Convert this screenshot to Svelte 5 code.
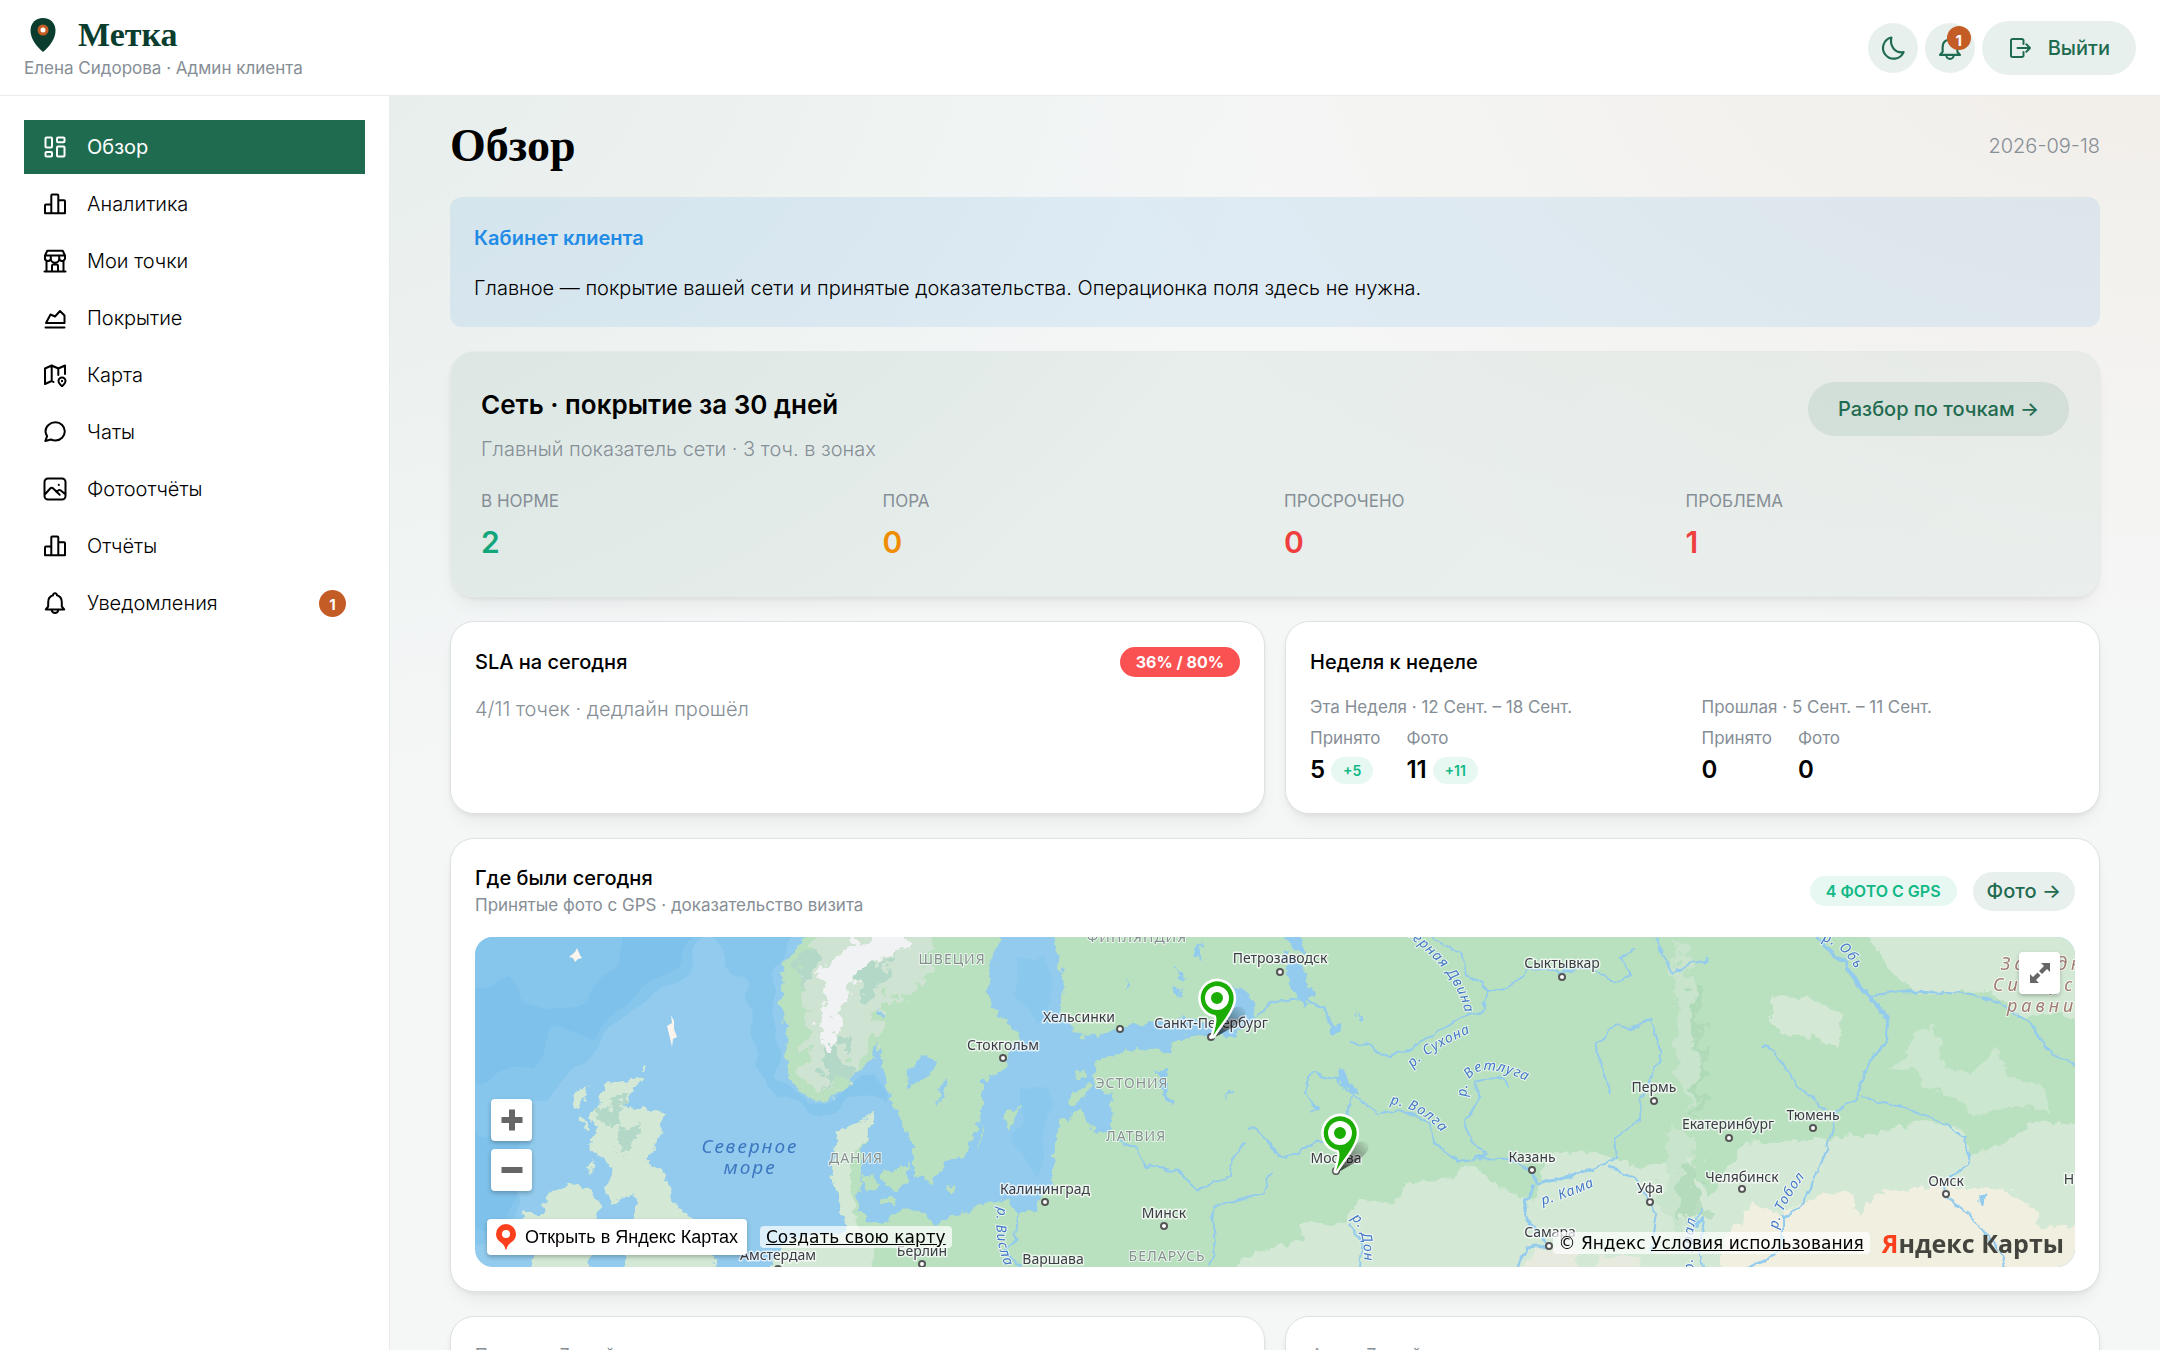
<script lang="ts">
  interface NavItem {
    id: string;
    label: string;
    icon: string;
    badge?: number;
  }

  const ICON_BARS =
    'M2 21.2h20M2 21V13.5a1 1 0 0 1 1-1h5.3V21M8.3 21V3.6a1 1 0 0 1 1-1h5a1 1 0 0 1 1 1V21M15.3 8.2H21a1 1 0 0 1 1 1V20.6';
  const ICON_BELL =
    'M12 2.2a2 2 0 0 1 2 2.1c3.1 1 4.8 3.6 4.8 6.9v4.3l2.4 2.9H2.8l2.4-2.9v-4.3c0-3.3 1.7-5.9 4.8-6.9a2 2 0 0 1 2-2.1M8.6 18.6a3.4 3.4 0 0 0 6.8 0';

  const NAV: NavItem[] = [
    {
      id: 'overview',
      label: 'Обзор',
      icon: 'M3.5 2.5H8a1 1 0 0 1 1 1v8a1 1 0 0 1-1 1H3.5a1 1 0 0 1-1-1v-8a1 1 0 0 1 1-1zM15 2.5h5.5a1 1 0 0 1 1 1v2.7a1 1 0 0 1-1 1H15a1 1 0 0 1-1-1V3.5a1 1 0 0 1 1-1zM15 11.5h5.5a1 1 0 0 1 1 1v8a1 1 0 0 1-1 1H15a1 1 0 0 1-1-1v-8a1 1 0 0 1 1-1zM3.5 17H8a1 1 0 0 1 1 1v2.5a1 1 0 0 1-1 1H3.5a1 1 0 0 1-1-1V18a1 1 0 0 1 1-1z',
    },
    { id: 'analytics', label: 'Аналитика', icon: ICON_BARS },
    {
      id: 'places',
      label: 'Мои точки',
      icon: 'M1.5 22.5h21M3.5 11.5v11M20.5 11.5v11M9 22.5v-5.5a1.5 1.5 0 0 1 1.5-1.5h3a1.5 1.5 0 0 1 1.5 1.5v5.5M4.3 1.8h15.4l2.3 4.7H2zM2 6.5v2a2.9 2.9 0 0 0 5.8 1a4.2 4.2 0 0 0 8.4 0a2.9 2.9 0 0 0 5.8-1v-2M7.8 6.5v3M16.2 6.5v3',
    },
    {
      id: 'coverage',
      label: 'Покрытие',
      icon: 'M2.5 21.5h19M3 17l4.5-8.5 4.5 2L17 5l4.5 4.5V17z',
    },
    {
      id: 'map',
      label: 'Карта',
      icon: 'M10.5 19l-1.8-1L2 21V5.5L8.7 2.5l6.6 3L22 2.5v8.5M8.7 2.5V18M15.3 5.5V12M19 23.3c-2.3-2.1-3.5-3.7-3.5-5.3a3.5 3.5 0 0 1 7 0c0 1.6-1.2 3.2-3.5 5.3zM19 17.7v.6',
    },
    {
      id: 'chats',
      label: 'Чаты',
      icon: 'M12.5 2.3c5.3 0 9.3 4.1 9.3 9s-4 9.2-9.3 9.2c-1.8 0-3.2-.3-4.6-1L2.3 21l1.8-4.9C3 14.6 2.5 13 2.5 11.3c0-5 4.5-9 10-9z',
    },
    {
      id: 'photos',
      label: 'Фотоотчёты',
      icon: 'M5 1.5h14a3.5 3.5 0 0 1 3.5 3.5v14a3.5 3.5 0 0 1-3.5 3.5H5A3.5 3.5 0 0 1 1.5 19V5A3.5 3.5 0 0 1 5 1.5zM1.8 17.5l5.4-6a2 2 0 0 1 3 0l6.5 6.3M13.5 15l1.7-1.5a2 2 0 0 1 2.6 0l4.5 3.8M15.8 7.8v.3',
    },
    { id: 'reports', label: 'Отчёты', icon: ICON_BARS },
    { id: 'notifications', label: 'Уведомления', icon: ICON_BELL, badge: 1 },
  ];

  const COVERAGE = [
    { label: 'В норме', value: 2, tone: 'ok' },
    { label: 'Пора', value: 0, tone: 'warn' },
    { label: 'Просрочено', value: 0, tone: 'bad' },
    { label: 'Проблема', value: 1, tone: 'bad' },
  ];

  const WEEKS = [
    {
      title: 'Эта Неделя · 12 Сент. – 18 Сент.',
      stats: [
        { label: 'Принято', value: 5, delta: '+5' },
        { label: 'Фото', value: 11, delta: '+11' },
      ],
    },
    {
      title: 'Прошлая · 5 Сент. – 11 Сент.',
      stats: [
        { label: 'Принято', value: 0, delta: '' },
        { label: 'Фото', value: 0, delta: '' },
      ],
    },
  ];

  // Map canvas is 1600x330 units, everything below is in those units.
  const CITIES = [
    { name: 'Петрозаводск', x: 805, y: 26, dx: 805, dy: 35 },
    { name: 'Хельсинки', x: 604, y: 85, dx: 645, dy: 92 },
    { name: 'Стокгольм', x: 528, y: 113, dx: 528, dy: 121 },
    { name: 'Санкт-Петербург', x: 736, y: 91, dx: 736, dy: 100 },
    { name: 'Москва', x: 861, y: 226, dx: 861, dy: 234 },
    { name: 'Казань', x: 1057, y: 225, dx: 1057, dy: 233 },
    { name: 'Самара', x: 1075, y: 300, dx: 1074, dy: 309 },
    { name: 'Калининград', x: 570, y: 257, dx: 570, dy: 265 },
    { name: 'Минск', x: 689, y: 281, dx: 689, dy: 289 },
    { name: 'Варшава', x: 578, y: 327, dx: 578, dy: 338 },
    { name: 'Сыктывкар', x: 1087, y: 31, dx: 1087, dy: 40 },
    { name: 'Пермь', x: 1179, y: 155, dx: 1179, dy: 164 },
    { name: 'Екатеринбург', x: 1253, y: 192, dx: 1254, dy: 201 },
    { name: 'Тюмень', x: 1338, y: 183, dx: 1338, dy: 191 },
    { name: 'Челябинск', x: 1267, y: 245, dx: 1267, dy: 252 },
    { name: 'Уфа', x: 1175, y: 256, dx: 1175, dy: 265 },
    { name: 'Омск', x: 1471, y: 249, dx: 1471, dy: 257 },
    { name: 'Новосибирск', x: 1634, y: 247, dx: 1634, dy: 257 },
    { name: 'Амстердам', x: 303, y: 323, dx: 303, dy: 332 },
    { name: 'Берлин', x: 447, y: 319, dx: 447, dy: 327 },
  ];

  const COUNTRIES = [
    { name: 'ШВЕЦИЯ', x: 477, y: 27 },
    { name: 'ДАНИЯ', x: 381, y: 226 },
    { name: 'ФИНЛЯНДИЯ', x: 662, y: 5 },
    { name: 'ЭСТОНИЯ', x: 657, y: 151 },
    { name: 'ЛАТВИЯ', x: 661, y: 204 },
    { name: 'БЕЛАРУСЬ', x: 692, y: 324 },
  ];

  const RIVER_NAMES = [
    { id: 'dvina', name: 'Северная Двина', d: 'M918-14C950 14 985 36 992 86' },
    { id: 'suhona', name: 'р. Сухона', d: 'M938 131Q952 114 1000 94' },
    { id: 'vetluga', name: 'р. Ветлуга', d: 'M992 160Q990 138 1006 134T1056 146' },
    { id: 'volga', name: 'р. Волга', d: 'M915 167Q950 172 972 202' },
    { id: 'don', name: 'р. Дон', d: 'M876 282Q890 292 889 328' },
    { id: 'kama', name: 'р. Кама', d: 'M1068 268Q1090 262 1124 247' },
    { id: 'tobol', name: 'р. Тобол', d: 'M1303 292Q1306 268 1336 232' },
    { id: 'ob', name: 'р. Обь', d: 'M1347 4Q1372 10 1384 40' },
    { id: 'ural', name: 'р. Урал', d: 'M1219 334Q1214 300 1224 272' },
    { id: 'visla', name: 'р. Висла', d: 'M523 270Q516 306 538 346' },
  ];

  const RIVERS = [
    '782,81 796,66 825,61 850,71 855,87',
    '957,0 986,17 993,37 1014,54 1007,74 986,81 954,101 929,116 907,119 893,107 875,104',
    '1014,54 1036,49 1054,31 1083,34 1114,31 1141,46 1157,39 1145,21 1161,11',
    '836,174 845,172 829,157 832,145 839,136 857,141 882,161 904,177 921,172 954,184 961,207 982,224 1007,221 1032,222 1054,232',
    '1032,151 1030,143 1018,139 1000,144 1004,164 989,184 996,204 1011,217 1004,223',
    '875,161 873,187 864,204 843,204 811,221 800,214 796,207 775,189',
    '643,204 661,211 671,229 704,234 723,254 754,239 758,222 770,204',
    '796,236 789,257 739,269 737,285 741,304 734,330',
    '873,286 887,304 884,330',
    '543,274 541,301 529,314 546,330',
    '1164,167 1178,137 1186,117 1176,82 1157,91 1143,87 1120,107 1135,157',
    '1118,231 1141,221 1139,201 1166,184 1164,167',
    '1133,229 1159,241 1176,267 1182,277 1176,317',
    '1180,0 1190,20 1196,37 1215,26 1231,24 1233,20',
    '1394,59 1425,54 1495,57 1526,67 1557,87 1573,114 1600,129',
    '1386,161 1413,166 1464,184 1491,201 1495,224 1470,247 1471,260 1495,277 1526,317 1530,330',
    '1285,112 1293,107 1324,151 1351,174',
    '1382,161 1363,174 1351,214 1328,267 1308,281 1308,307 1293,322 1273,330',
    '1227,271 1220,290 1229,281 1225,317 1229,330',
  ];

  const WIDE_RIVERS = [
    '1340,0 1371,27 1383,50 1394,59 1413,81 1411,105 1394,124 1382,161',
    '1054,232 1064,247 1075,244 1098,239 1118,231',
    '1061,248 1052,262 1050,275 1057,291 1075,309 1050,311 1043,330',
  ];

  const PINS = [
    { id: 'spb', x: 738, y: 100 },
    { id: 'msk', x: 861, y: 235 },
  ];

  let active = $state('overview');
</script>

{#snippet icon(d: string)}
  <svg class="icon" viewBox="0 0 24 24" aria-hidden="true"><path {d} /></svg>
{/snippet}

<div class="shell">
  <header class="topbar">
    <div class="brand">
      <div class="brand-row">
        <svg class="brand-mark" viewBox="0 0 38 38" aria-hidden="true">
          <path d="M19 2C11.5 2 6.5 7.3 6.5 14.5c0 8 5.5 15.5 12.5 21.5 7-6 12.5-13.5 12.5-21.5C31.5 7.3 26.5 2 19 2z" fill="#0b3d2e" />
          <circle cx="19" cy="14" r="4" fill="#fff" stroke="#c45c26" stroke-width="3" />
        </svg>
        <span class="brand-name">Метка</span>
      </div>
      <div class="brand-user">Елена Сидорова · Админ клиента</div>
    </div>
    <div class="top-actions">
      <button type="button" class="round" aria-label="Тёмная тема">
        {@render icon('M10.5 2.3C8.7 9.5 13.5 17.2 21.8 15.8A9.9 9.9 0 1 1 10.5 2.3z')}
      </button>
      <button type="button" class="round" aria-label="Уведомления">
        {@render icon(ICON_BELL)}
        <span class="count count-over">1</span>
      </button>
      <button type="button" class="pill exit">
        {@render icon('M15.5 8V4.5a1.5 1.5 0 0 0-1.5-1.5H4.5A1.5 1.5 0 0 0 3 4.5v15A1.5 1.5 0 0 0 4.5 21H14a1.5 1.5 0 0 0 1.5-1.5V16M9.5 12H22M18.3 8.3L22 12l-3.7 3.7')}
        Выйти
      </button>
    </div>
  </header>

  <div class="body">
    <nav class="side" aria-label="Разделы">
      {#each NAV as item (item.id)}
        <a
          href="#{item.id}"
          class="nav-item"
          class:active={active === item.id}
          onclick={() => (active = item.id)}
        >
          {@render icon(item.icon)}
          <span class="nav-label">{item.label}</span>
          {#if item.badge}<span class="count count-side">{item.badge}</span>{/if}
        </a>
      {/each}
    </nav>

    <main class="main">
      <div class="page-head">
        <h1>Обзор</h1>
        <span class="date">2026-09-18</span>
      </div>

      <section class="alert">
        <h2>Кабинет клиента</h2>
        <p>Главное — покрытие вашей сети и принятые доказательства. Операционка поля здесь не нужна.</p>
      </section>

      <section class="card hero">
        <div class="hero-head">
          <div>
            <h2>Сеть · покрытие за 30 дней</h2>
            <p class="muted">Главный показатель сети · 3 точ. в зонах</p>
          </div>
          <button type="button" class="pill">Разбор по точкам →</button>
        </div>
        <div class="hero-stats">
          {#each COVERAGE as stat (stat.label)}
            <div>
              <div class="stat-label">{stat.label}</div>
              <div class="stat-value {stat.tone}">{stat.value}</div>
            </div>
          {/each}
        </div>
      </section>

      <div class="pair">
        <section class="card">
          <div class="card-head">
            <h3>SLA на сегодня</h3>
            <span class="badge badge-red">36% / 80%</span>
          </div>
          <p class="muted">4/11 точек · дедлайн прошёл</p>
        </section>
        <section class="card">
          <div class="card-head"><h3>Неделя к неделе</h3></div>
          <div class="weeks">
            {#each WEEKS as week (week.title)}
              <div>
                <div class="small">{week.title}</div>
                <div class="week-stats">
                  {#each week.stats as s (s.label)}
                    <div>
                      <div class="small">{s.label}</div>
                      <div class="week-value">
                        <b>{s.value}</b>
                        {#if s.delta}<span class="delta">{s.delta}</span>{/if}
                      </div>
                    </div>
                  {/each}
                </div>
              </div>
            {/each}
          </div>
        </section>
      </div>

      <section class="card">
        <div class="map-head">
          <div>
            <h3>Где были сегодня</h3>
            <p class="small">Принятые фото с GPS · доказательство визита</p>
          </div>
          <div class="map-actions">
            <span class="badge badge-green">4 ФОТО С GPS</span>
            <button type="button" class="pill pill-small">Фото →</button>
          </div>
        </div>

        <div class="map">
          <svg class="map-canvas" viewBox="0 0 1600 330" preserveAspectRatio="xMidYMid slice" role="img" aria-label="Карта визитов">
            <defs>
              <!-- breaks straight polygon edges up into a coastline -->
              <filter id="coast" x="0" y="0" width="1600" height="330" filterUnits="userSpaceOnUse">
                <feTurbulence type="fractalNoise" baseFrequency="0.11" numOctaves="3" seed="4" result="n" />
                <feDisplacementMap in="SourceGraphic" in2="n" scale="12" xChannelSelector="R" yChannelSelector="G" />
              </filter>
              <filter id="stream" x="0" y="0" width="1600" height="330" filterUnits="userSpaceOnUse">
                <feTurbulence type="fractalNoise" baseFrequency="0.09" numOctaves="2" seed="9" result="n" />
                <feDisplacementMap in="SourceGraphic" in2="n" scale="8" xChannelSelector="R" yChannelSelector="G" />
              </filter>
              <filter id="ridge" x="0" y="0" width="1600" height="330" filterUnits="userSpaceOnUse">
                <feTurbulence type="fractalNoise" baseFrequency="0.07" numOctaves="4" seed="2" result="n" />
                <feDisplacementMap in="SourceGraphic" in2="n" scale="36" xChannelSelector="R" yChannelSelector="G" />
              </filter>
              <filter id="seabed" x="0" y="0" width="1600" height="330" filterUnits="userSpaceOnUse">
                <feTurbulence type="fractalNoise" baseFrequency="0.02" numOctaves="2" seed="7" result="n" />
                <feDisplacementMap in="SourceGraphic" in2="n" scale="40" xChannelSelector="R" yChannelSelector="G" />
              </filter>
              <linearGradient id="pin-shade" x1="0" y1="1" x2="1" y2="0">
                <stop offset="0" stop-color="#000" stop-opacity="0.75" />
                <stop offset="1" stop-color="#000" stop-opacity="0" />
              </linearGradient>
            </defs>

            <rect width="1600" height="330" fill="#92cbed" />
            <g filter="url(#seabed)">
              <path fill="#86c6ed" d="M-20-20H245L200 45 150 85 95 130 60 165 45 230 30 290-20 320z" />
              <path fill="#7ec1ea" d="M150-20H240L195 30 160 60 120 100 80 90 50 130-20 150V60L30 40 60 70 110 70 140 30z" />
              <path fill="#7ec1ea" d="M-20 200L45 190 50 240 20 285-20 290z" />
              <path fill="#86c6ed" d="M235-20H325L300 30 300 90 300 140 330 170 375 155 400 130 410 170 385 165 350 180 300 165 280 120 275 70 250 35z" />
              <path fill="#86c6ed" d="M540 20L575 20 580 70 560 90 545 60zM545 150L570 160 560 240 545 220z" opacity="0.6" />
            </g>

            <g filter="url(#coast)">
              <path
                fill="#b9e0bf"
                d="M339-10L318 16 305 27 309 47 305 62 309 84 312 101 309 117 314 141 323 154 348 165 368 154 382 134 398 124 402 102 404 117 411 141 416 164 425 184 439 207 439 241 457 246 464 237 470 222 489 221 502 191 507 164 507 144 529 131 532 121 536 111 546 97 532 87 518 71 512 51 518 17 529-10z"
              />
              <path
                fill="#b9e0bf"
                d="M577-10L584 24 589 51 584 74 593 84 605 101 632 97 657 87 696 84 711 79 739 90 739 99 718 98 698 107 698 116 661 111 632 121 620 127 621 151 637 156 636 191 623 196 605 174 587 184 579 204 579 247 564 261 561 274 539 274 534 262 507 267 461 287 443 274 429 271 407 287 393 284 382 267 386 237 386 215 393 201 400 174 386 184 361 197 357 237 366 267 371 294 332 299 307 306 290 345H1620V-10z"
              />
              <path fill="#b9e0bf" d="M386 240L400 238 404 252 392 256zM407 232L420 236 434 226 433 248 418 254 408 244zM404 262L420 260 418 268 406 268zM511 184L500 218 504 200zM546 166L540 180 530 197 529 177zM593 164L605 150 618 147 612 160 597 168zM600 134L612 132 610 142 602 142zM470 251L478 248 476 256z" />
              <path
                fill="#d3e9d5"
                d="M132 146L166 142 150 171 188 174 186 197 171 224 189 237 198 267 218 282 230 300 248 345H150L150 317 161 281 161 257 136 266 132 251 139 231 121 217 114 211 121 191 114 181 125 164zM77 254L96 247 116 252 125 271 118 304 111 345H52L61 317 48 277 71 277 70 267zM113 149L111 161 100 171 98 157zM104 175L114 190 112 194 104 180zM168 129L173 132 166 132zM112 230L120 222 117 238z"
              />
              <path fill="#d3e9d5" d="M361 197L386 184 400 174 393 201 382 215 374 225 378 270 384 290 400 302 395 345H290L307 306 332 299 371 294 366 267 357 237z" />
              <path
                fill="#d3e9d5"
                d="M993 226L979 241 934 246 918 267 886 262 868 286 825 287 829 304 782 314 740 345H1620V190L1560 184 1530 205 1499 217 1484 191 1449 184 1398 197 1324 204 1270 207 1262 217 1235 260 1220 240 1210 210 1190 225 1164 231 1140 222 1114 214 1075 217 1060 262 1030 255z"
              />
              <path fill="#d3e9d5" d="M1386-10L1421 41 1445 57 1515 54 1545 80 1580 75 1620 90V-10zM1297 57L1340 62 1367 80 1364 112 1340 100 1310 98 1297 85z" />
              <path fill="#d3e9d5" opacity="0.75" d="M1440 95L1460 90 1470 130 1500 135 1520 110 1535 140 1570 150 1575 175 1540 168 1500 180 1480 160 1450 150 1440 130 1415 135 1430 118z" />
              <path fill="#e7eadf" d="M1040 345L1060 312 1100 310 1105 345zM1115 345L1125 318 1165 322 1160 345z" />
              <path
                fill="#f1efe0"
                d="M1242 345L1250 300 1266 284 1277 267 1308 277 1347 257 1379 254 1382 277 1406 254 1464 251 1530 251 1561 274 1565 291 1620 287V345z"
              />
            </g>

            <g filter="url(#ridge)">
              <path fill="#cfe3d2" d="M345-10H455L455 30 435 55 410 62 395 110 370 140 345 155 328 140 333 90 325 60 332 30z" />
              <path fill="#b4d8c8" d="M345 110L370 100 372 140 350 150zM385 30L415 20 410 55 385 60zM322 20L340 8 342 30 325 50zM130 165L150 160 145 190 128 190zM145 195L165 190 160 210 142 215z" />
              <path fill="#f1f2f3" d="M405-20H435L425 15 400 20 385 35 375 55 366 75 360 100 354 118 348 110 345 80 352 60 345 45 350 25 370 12 390 5z" />
              <path fill="#c9e4cc" d="M1200 0L1215 10 1218 70 1224 130 1212 180 1202 120zM1195 190L1215 200 1225 260 1205 300 1185 270z" />
              <path fill="#a9d6b3" d="M1218 40L1226 60 1228 180 1220 170zM1205 215L1222 235 1228 270 1205 290z" opacity="0.6" />
            </g>

            <g filter="url(#coast)" fill="#92cbed">
              <path d="M436 128L446 118 460 124 455 140 440 145 432 150zM473 141L470 156 462 169 464 154z" />
              <path d="M754 48L770 54 779 66 780 84 768 90 760 101 736 96 745 80z" />
              <path d="M808 14L822 22 830 36 839 57 829 68 818 54 811 36z" />
              <path d="M803-10H822L830 16 820 14z" />
              <path d="M680 134L692 134 692 150 700 167 692 165 686 150z" />
              <path d="M862 129L873 141 886 157 876 159 866 146zM855 87L868 90 866 96 856 96zM881 72L889 85 885 87zM752 150L760 156 752 161zM698 30L712 40 710 44zM694 48L708 54 702 60zM722 10L728 6 724 24 718 20zM652 40L655 50 652 54z" />
              <path d="M412 205L418 206 416 212zM402 70L412 78 408 80zM1500 258L1512 256 1508 268 1502 264z" />
            </g>
            <path fill="#fbf4ec" d="M94 20l6-5 2-4 3 7 2 3-4 1-3 3-2-4zM192 89l5-3-1-8 3 6v8l3 8-4 2-1 8-2-9z" />

            <g class="rivers" filter="url(#stream)">
              {#each RIVERS as points}<polyline {points} />{/each}
              {#each WIDE_RIVERS as points}<polyline class="wide" {points} />{/each}
            </g>

            {#each RIVER_NAMES as river (river.id)}
              <path id="path-{river.id}" d={river.d} fill="none" />
              <text class="lbl river"><textPath href="#path-{river.id}">{river.name}</textPath></text>
            {/each}
            {#each COUNTRIES as c (c.name)}
              <text class="lbl country" x={c.x} y={c.y}>{c.name}</text>
            {/each}
            <text class="sea" x="275" y="216">Северное</text>
            <text class="sea" x="275" y="237">море</text>
            <text class="lbl plain" x="1526" y="33">Западно-</text>
            <text class="lbl plain" x="1518" y="54">Сибирская</text>
            <text class="lbl plain" x="1532" y="75">равнина</text>
            {#each CITIES as c (c.name)}
              <circle class="dot" cx={c.dx} cy={c.dy} r="3" />
              <text class="lbl city" x={c.x} y={c.y}>{c.name}</text>
            {/each}

            {#each PINS as pin (pin.id)}
              <g transform="translate({pin.x} {pin.y})">
                <path d="M2 0L16-24C22-34 35-32 32-22 28-14 12-5 2 0z" fill="url(#pin-shade)" />
                <path d="M0-1C6-11 17-23 20-34A16.5 17 0 1 0 2-22C5-20 3-10 0-1z" fill="#1bad03" stroke="#fff" stroke-width="5" stroke-linejoin="round" paint-order="stroke" />
                <circle cx="4" cy="-39" r="9" fill="#1bad03" stroke="#fff" stroke-width="6" />
              </g>
            {/each}
          </svg>

          <button type="button" class="map-btn fullscreen" aria-label="На весь экран">
            <svg viewBox="0 0 24 24" aria-hidden="true">
              <path d="M13 2h9v9l-3-3-5 5-3-3 5-5zM11 22H2v-9l3 3 4.5-4.5 3 3L8 19z" />
            </svg>
          </button>
          <div class="zoom">
            <button type="button" class="map-btn" aria-label="Приблизить">
              <svg viewBox="0 0 24 24" aria-hidden="true"><path d="M9 1.5h6V9h7.5v6H15v7.5H9V15H1.5V9H9z" /></svg>
            </button>
            <button type="button" class="map-btn" aria-label="Отдалить">
              <svg viewBox="0 0 24 24" aria-hidden="true"><path d="M1.5 9h21v6h-21z" /></svg>
            </button>
          </div>
          <div class="map-links">
            <a class="open-maps" href="#open-maps">
              <svg viewBox="0 0 20 26" aria-hidden="true">
                <path d="M10 0A10 10 0 0 0 0 10c0 4 2 6.5 5 8.5 2.5 1.8 4 4 4.3 6.5.1.8 1.3.8 1.4 0 .3-2.5 1.8-4.7 4.3-6.5 3-2 5-4.5 5-8.5A10 10 0 0 0 10 0z" fill="#fc3f1d" />
                <circle cx="10" cy="10" r="4" fill="#fff" />
              </svg>
              Открыть в Яндекс Картах
            </a>
            <a class="make-map" href="#make-map">Создать свою карту</a>
          </div>
          <div class="copyright">
            <span class="terms">© Яндекс <a href="#terms">Условия использования</a></span>
            <span class="logo"><i>Я</i>ндекс Карты</span>
          </div>
        </div>
      </section>

      <div class="pair">
        <section class="card chart"><h3 class="small">Принято · 7 дней</h3></section>
        <section class="card chart"><h3 class="small">Фото · 7 дней</h3></section>
      </div>
    </main>
  </div>
</div>

<style>
  :global(body) {
    overflow: hidden;
    background: #f5f7f6;
  }
  .shell {
    --green: #1f6b4f;
    --muted: #868e96;
    --line: #dee2e6;
    height: 100vh;
    display: flex;
    flex-direction: column;
    overflow: hidden;
    font: 300 20px/30px Inter, sans-serif;
    color: #000;
    background:
      radial-gradient(1100px 800px at 10% 0%, rgba(31, 107, 79, 0.08), transparent 100%),
      radial-gradient(1100px 700px at 100% 0%, rgba(196, 112, 38, 0.07), transparent 100%),
      #f5f7f7;
  }
  h1,
  h2,
  h3,
  p {
    margin: 0;
  }
  button {
    font: inherit;
    border: 0;
    padding: 0;
    cursor: pointer;
  }
  .icon {
    width: 24px;
    height: 24px;
    flex: none;
    fill: none;
    stroke: currentColor;
    stroke-width: 2;
    stroke-linecap: round;
    stroke-linejoin: round;
  }

  .topbar {
    flex: none;
    display: flex;
    align-items: center;
    justify-content: space-between;
    height: 96px;
    box-sizing: border-box;
    padding: 0 24px;
    background: #fff;
    border-bottom: 1px solid #e9ecef;
  }
  .brand-row {
    display: flex;
    align-items: center;
    gap: 16px;
    height: 40px;
  }
  .brand-mark {
    width: 38px;
    height: 38px;
  }
  .brand-name {
    font: 700 34px/40px 'Liberation Serif', serif;
    color: #0b3d2e;
  }
  .brand-user {
    font-size: 17px;
    line-height: 26px;
    font-weight: 400;
    color: var(--muted);
  }
  .top-actions {
    display: flex;
    align-items: center;
    gap: 7px;
  }
  .round {
    position: relative;
    display: grid;
    place-items: center;
    width: 50px;
    height: 50px;
    border-radius: 50%;
    background: #e8f0ed;
    color: var(--green);
  }
  .round .icon {
    width: 26px;
    height: 26px;
  }
  .pill {
    display: flex;
    align-items: center;
    gap: 16px;
    height: 54px;
    padding: 0 30px;
    border-radius: 27px;
    background: rgba(31, 107, 79, 0.1);
    color: var(--green);
    font-weight: 500;
  }
  .exit {
    padding: 0 26px;
  }
  .pill-small {
    height: 39px;
    padding: 0 14px;
  }
  .count {
    display: grid;
    place-items: center;
    border-radius: 50%;
    background: #c45c26;
    color: #fff;
    font-weight: 700;
    font-size: 15px;
  }
  .count-over {
    position: absolute;
    top: 3px;
    right: 4px;
    width: 24px;
    height: 24px;
  }
  .count-side {
    width: 27px;
    height: 27px;
    margin-left: auto;
  }

  .body {
    flex: 1;
    min-height: 0;
    display: flex;
  }
  .side {
    flex: none;
    width: 390px;
    box-sizing: border-box;
    padding: 24px;
    display: flex;
    flex-direction: column;
    gap: 3px;
    background: #fff;
    border-right: 1px solid #e9ecef;
  }
  .nav-item {
    display: flex;
    align-items: center;
    height: 54px;
    padding: 0 19px;
    gap: 20px;
    color: #000;
    text-decoration: none;
  }
  .nav-item.active {
    background: var(--green);
    color: #fff;
    font-weight: 400;
  }

  .main {
    flex: 1;
    min-width: 0;
    padding: 22px 60px;
    display: flex;
    flex-direction: column;
    gap: 24px;
  }
  .main > * {
    flex-shrink: 0;
  }
  .page-head {
    display: flex;
    align-items: center;
    justify-content: space-between;
    height: 55px;
  }
  h1 {
    font: 700 46px/48px 'Liberation Serif', serif;
  }
  .date {
    color: var(--muted);
  }
  .alert {
    padding: 24px;
    border-radius: 12px;
    background: rgba(34, 139, 230, 0.1);
    display: flex;
    flex-direction: column;
    gap: 18px;
  }
  .alert h2 {
    font-size: 20px;
    line-height: 34px;
    font-weight: 600;
    color: #228be6;
  }
  .card {
    box-sizing: border-box;
    padding: 24px;
    border: 1px solid var(--line);
    border-radius: 24px;
    background: #fff;
    box-shadow:
      0 2px 4px rgba(0, 0, 0, 0.05),
      0 12px 20px -8px rgba(0, 0, 0, 0.08);
  }
  .hero {
    padding: 30px;
    border-color: #e6eaea;
    background: linear-gradient(135deg, rgba(31, 107, 79, 0.08), rgba(31, 107, 79, 0.05));
  }
  .hero-head {
    display: flex;
    justify-content: space-between;
    align-items: flex-start;
  }
  .hero h2 {
    font-size: 26px;
    line-height: 46px;
    font-weight: 600;
  }
  .hero p {
    margin-top: 6px;
  }
  .muted {
    color: var(--muted);
  }
  .hero-stats {
    display: grid;
    grid-template-columns: repeat(4, 1fr);
    gap: 18px;
    margin-top: 24px;
  }
  .stat-label {
    font-size: 17px;
    line-height: 27px;
    font-weight: 400;
    color: var(--muted);
    text-transform: uppercase;
  }
  .stat-value {
    margin-top: 3px;
    font-size: 30px;
    line-height: 48px;
    font-weight: 600;
  }
  .ok {
    color: #12a67a;
  }
  .warn {
    color: #f08c00;
  }
  .bad {
    color: #f03e3e;
  }

  .pair {
    display: grid;
    grid-template-columns: 1fr 1fr;
    gap: 20px;
  }
  .pair .card {
    min-height: 193px;
  }
  .card-head {
    display: flex;
    justify-content: space-between;
    align-items: center;
    height: 32px;
    margin-bottom: 16px;
  }
  h3 {
    font-size: 20px;
    line-height: 32px;
    font-weight: 500;
  }
  .badge {
    height: 30px;
    padding: 0 16px;
    border-radius: 15px;
    font-size: 16px;
    line-height: 30px;
    font-weight: 700;
  }
  .badge-red {
    background: #fa5252;
    color: #fff;
  }
  .badge-green {
    background: #e7f8f2;
    color: #12b886;
    font-weight: 600;
  }
  .small {
    font-size: 17px;
    line-height: 27px;
    font-weight: 400;
    color: var(--muted);
  }
  .weeks {
    display: grid;
    grid-template-columns: 1fr 1fr;
    gap: 18px;
  }
  .week-stats {
    display: flex;
    gap: 26px;
    margin-top: 4px;
  }
  .week-value {
    display: flex;
    align-items: center;
    gap: 6px;
    height: 36px;
    font-size: 24px;
  }
  .week-value b {
    font-weight: 600;
  }
  .delta {
    height: 27px;
    padding: 0 12px;
    border-radius: 14px;
    background: #e7f8f2;
    color: #12b886;
    font-size: 14px;
    line-height: 27px;
    font-weight: 600;
  }
  .chart {
    padding-top: 25px;
  }

  .map-head {
    display: flex;
    justify-content: space-between;
    align-items: center;
    height: 56px;
    margin-bottom: 18px;
  }
  .map-head h3 {
    line-height: 28px;
  }
  .map-actions {
    display: flex;
    align-items: center;
    gap: 16px;
  }
  .map {
    position: relative;
    height: 330px;
    border-radius: 18px;
    overflow: hidden;
  }
  .map-canvas {
    display: block;
    width: 100%;
    height: 100%;
    font-family: 'Noto Sans', sans-serif;
    font-weight: 400;
  }
  .rivers polyline {
    fill: none;
    stroke: #92cbed;
    stroke-width: 2;
    stroke-linejoin: round;
  }
  .rivers .wide {
    stroke-width: 3;
  }
  .lbl {
    stroke: rgba(255, 255, 255, 0.7);
    stroke-width: 3px;
    stroke-linejoin: round;
    paint-order: stroke;
  }
  .city {
    font-size: 14px;
    fill: #3c3c44;
    text-anchor: middle;
  }
  .dot {
    fill: #fff;
    stroke: #555;
    stroke-width: 2;
  }
  .country {
    font-size: 14px;
    letter-spacing: 1px;
    fill: #84908d;
    stroke-width: 2px;
    text-anchor: middle;
  }
  .river {
    font-size: 14px;
    font-style: italic;
    letter-spacing: 1px;
    fill: #4177c6;
    stroke-width: 2px;
  }
  .sea {
    font-size: 19px;
    font-style: italic;
    letter-spacing: 2px;
    fill: #3d77c2;
    text-anchor: middle;
  }
  .plain {
    font-size: 18px;
    font-style: italic;
    letter-spacing: 4px;
    fill: #a07c72;
    stroke-width: 2px;
  }
  .map-btn {
    display: grid;
    place-items: center;
    width: 41px;
    height: 42px;
    border-radius: 4px;
    background: #fff;
    box-shadow: 0 2px 4px rgba(0, 0, 0, 0.25);
  }
  .map-btn svg {
    width: 24px;
    height: 24px;
    fill: #666;
  }
  .fullscreen {
    position: absolute;
    top: 15px;
    right: 15px;
  }
  .zoom {
    position: absolute;
    left: 16px;
    top: 162px;
    display: grid;
    gap: 8px;
  }
  .map-links {
    position: absolute;
    left: 12px;
    bottom: 12px;
    display: flex;
    align-items: center;
    gap: 13px;
    color: #000;
  }
  .map-links a {
    color: inherit;
  }
  .open-maps {
    display: flex;
    align-items: center;
    gap: 9px;
    height: 36px;
    padding: 0 9px;
    border-radius: 4px;
    background: #fff;
    box-shadow: 0 2px 4px rgba(0, 0, 0, 0.25);
    font: 18px/36px 'Liberation Sans', sans-serif;
    text-decoration: none;
  }
  .open-maps svg {
    width: 20px;
    height: 26px;
  }
  .make-map,
  .terms {
    padding: 0 6px;
    border-radius: 4px;
    background: rgba(255, 255, 255, 0.7);
    font: 17px/22px 'DejaVu Sans', sans-serif;
  }
  .copyright {
    position: absolute;
    right: 11px;
    bottom: 8px;
    display: flex;
    align-items: center;
    gap: 12px;
    color: #000;
  }
  .copyright a {
    color: inherit;
  }
  .logo {
    font: 700 25px/32px 'Open Sans', sans-serif;
    color: #44443f;
  }
  .logo i {
    font-style: normal;
    color: #fc3f1d;
  }
</style>
